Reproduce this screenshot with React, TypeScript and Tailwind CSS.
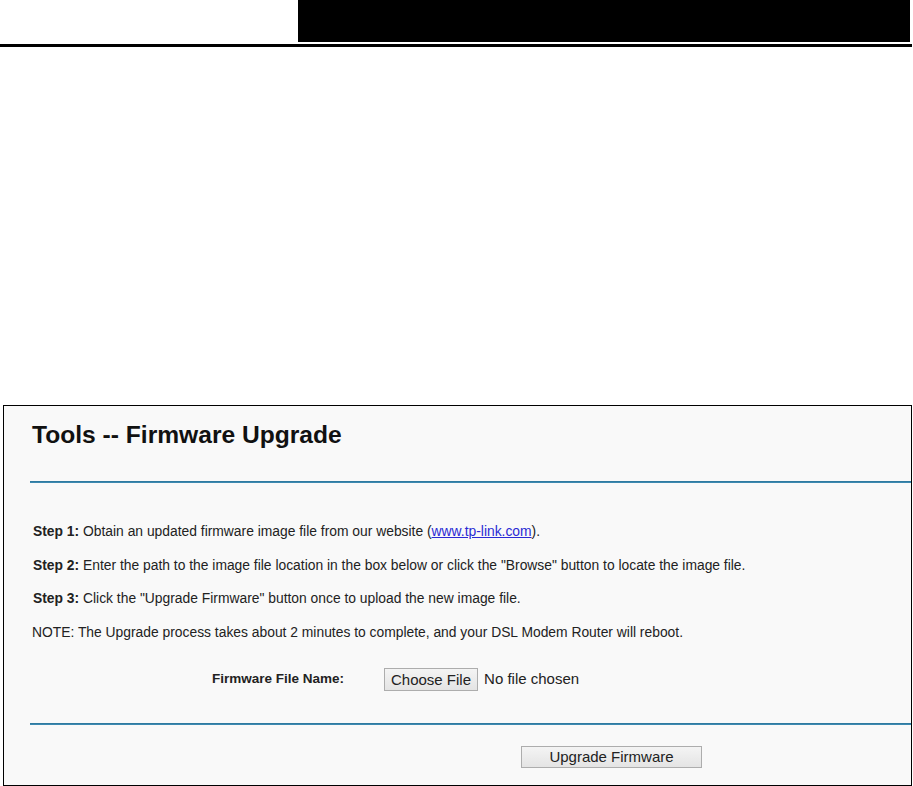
const font = { fontFamily: '"Liberation Sans", Arial, sans-serif' };

const steps = [
  { label: "Step 1:", text: "Obtain an updated firmware image file from our website (", link: "www.tp-link.com", after: ")." },
  { label: "Step 2:", text: 'Enter the path to the image file location in the box below or click the "Browse" button to locate the image file.' },
  { label: "Step 3:", text: 'Click the "Upgrade Firmware" button once to upload the new image file.' },
];

export default function App() {
  return (
    <div className="w-[913px] h-[786px] bg-white overflow-hidden" style={font}>
      {/* page header band */}
      <div className="flex h-[42px]">
        <div className="w-[298px]" />
        <div className="w-[612px] bg-black" />
      </div>
      <div className="mt-[2px] h-[3px] w-[912px] bg-black" />

      {/* firmware panel */}
      <div className="mt-[358px] ml-[3px] w-[909px] h-[381px] border border-black bg-[#f9f9f9] pl-[26px] pt-[14px]">
        <h1 className="text-[24.6px] leading-[30px] font-bold text-[#111] pl-[2px]">Tools -- Firmware Upgrade</h1>
        <div className="mt-[31px] h-[2px] bg-[#3d89b0] border-t border-[#2f7aa0]" />

        <div className="mt-[32px] text-[13.85px] text-[#222] pl-[3px]">
          {steps.map((s) => (
            <p key={s.label} className="leading-[33.7px]">
              <b>{s.label}</b> {s.text}
              {s.link && (
                <>
                  <a href="#" className="text-[#2a2ad4] underline">{s.link}</a>
                  {s.after}
                </>
              )}
            </p>
          ))}
          <p className="leading-[33.7px] -ml-[1px]">
            NOTE: The Upgrade process takes about 2 minutes to complete, and your DSL Modem Router will reboot.
          </p>
        </div>

        <div className="mt-[18px] flex items-center h-[23px]">
          <span className="ml-[182px] w-[172px] text-[13.5px] font-bold text-[#222]">Firmware File Name:</span>
          <button className="h-[23px] px-[6px] text-[15px] text-[#222] border border-[#adadad] bg-gradient-to-b from-[#f4f4f4] to-[#e4e4e4]">
            Choose File
          </button>
          <span className="ml-[6px] text-[15px] text-[#222]">No file chosen</span>
        </div>

        <div className="mt-[32px] h-[2px] bg-[#3d89b0] border-t border-[#2f7aa0]" />

        <div className="mt-[21px] flex">
          <button className="ml-[491px] w-[181px] h-[22px] text-[15px] leading-[20px] text-[#222] border border-[#adadad] bg-gradient-to-b from-[#f4f4f4] to-[#e4e4e4]">
            Upgrade Firmware
          </button>
        </div>
      </div>
    </div>
  );
}
